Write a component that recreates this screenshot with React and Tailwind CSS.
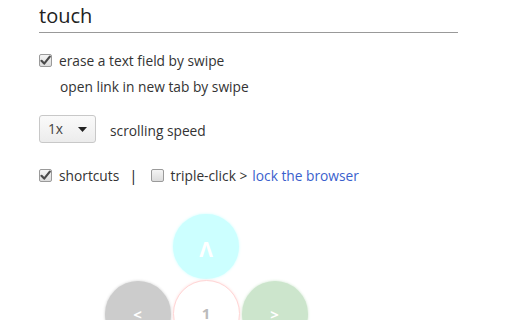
import React from "react";

function Check({ checked }) {
  return (
    <span className="w-[13px] h-[13px] shrink-0 border border-[#9a9a9a] rounded-[2px] bg-gradient-to-b from-[#f4f4f4] to-[#dcdcdc] flex items-center justify-center">
      {checked ? (
        <svg width="11" height="11" viewBox="0 0 11 11">
          <path d="M1.5 5.8 L4.2 8.6 L9.8 1.6" fill="none" stroke="#4a4a4a" strokeWidth="2.2" strokeLinecap="round" strokeLinejoin="round" />
        </svg>
      ) : null}
    </span>
  );
}

export default function App() {
  const font = { fontFamily: '"Open Sans", "Noto Sans", sans-serif' };
  return (
    <div className="w-[512px] h-[320px] overflow-hidden bg-white text-[#333]" style={font}>
      <div className="pl-[39px] w-[458px]">
        <h1 className="text-[20px] leading-[28px] pt-[2px] pb-[2px] border-b border-[#999] text-[#222]">touch</h1>

        <div className="mt-[19px] h-[16px] flex items-center gap-[7px] text-[13.75px]">
          <Check checked />
          <span className="mt-[2px]">erase a text field by swipe</span>
        </div>
        <div className="mt-[10px] h-[16px] flex items-center pl-[21px] text-[13.75px]">
          <span className="mt-[3px]">open link in new tab by swipe</span>
        </div>

        <div className="mt-[21px] flex items-center gap-[14px] text-[13.75px]">
          <div className="w-[57px] h-[28px] border border-[#c8c8c8] rounded-[3px] bg-gradient-to-b from-[#fafafa] to-[#ececec] flex items-center justify-between pl-[8px] pr-[8px]">
            <span className="text-[#444]">1x</span>
            <svg width="9" height="5" viewBox="0 0 9 5">
              <path d="M0 0 L9 0 L4.5 5 Z" fill="#222" />
            </svg>
          </div>
          <span className="mt-[4px]">scrolling speed</span>
        </div>

        <div className="mt-[24px] h-[16px] flex items-center text-[13.75px]">
          <Check checked />
          <span className="ml-[7px] mt-[2px]">shortcuts</span>
          <span className="ml-[10px] mt-[1px] text-[#222] text-[15px]">|</span>
          <span className="ml-[13px]"><Check /></span>
          <span className="ml-[7px] mt-[2px]">triple-click &gt;</span>
          <span className="ml-[5px] mt-[2px] text-[#3a5fcd]">lock the browser</span>
        </div>
      </div>

      <div className="mt-[31px] flex flex-col items-center w-[412px]">
        <div className="w-[66px] h-[65px] rounded-full bg-[#ccffff] shadow-[0_0_3px_#ccffff] flex items-center justify-center pt-[6px] text-white text-[21px] font-bold">
          Λ
        </div>
        <div className="mt-[2px] flex gap-[2px]">
          <div className="w-[66px] h-[66px] rounded-full bg-[#cccccc] shadow-[0_0_3px_#cccccc] flex items-center justify-center text-white text-[15px] font-bold">&lt;</div>
          <div className="w-[67px] h-[67px] -mt-[1px] rounded-full bg-white border border-[#ffd6d6] shadow-[0_0_3px_#ffe0e0] flex items-center justify-center text-[#bbbbbb] text-[15px] font-bold">1</div>
          <div className="w-[66px] h-[66px] rounded-full bg-[#cce5cc] shadow-[0_0_3px_#cce5cc] flex items-center justify-center text-white text-[15px] font-bold">&gt;</div>
        </div>
      </div>
    </div>
  );
}
